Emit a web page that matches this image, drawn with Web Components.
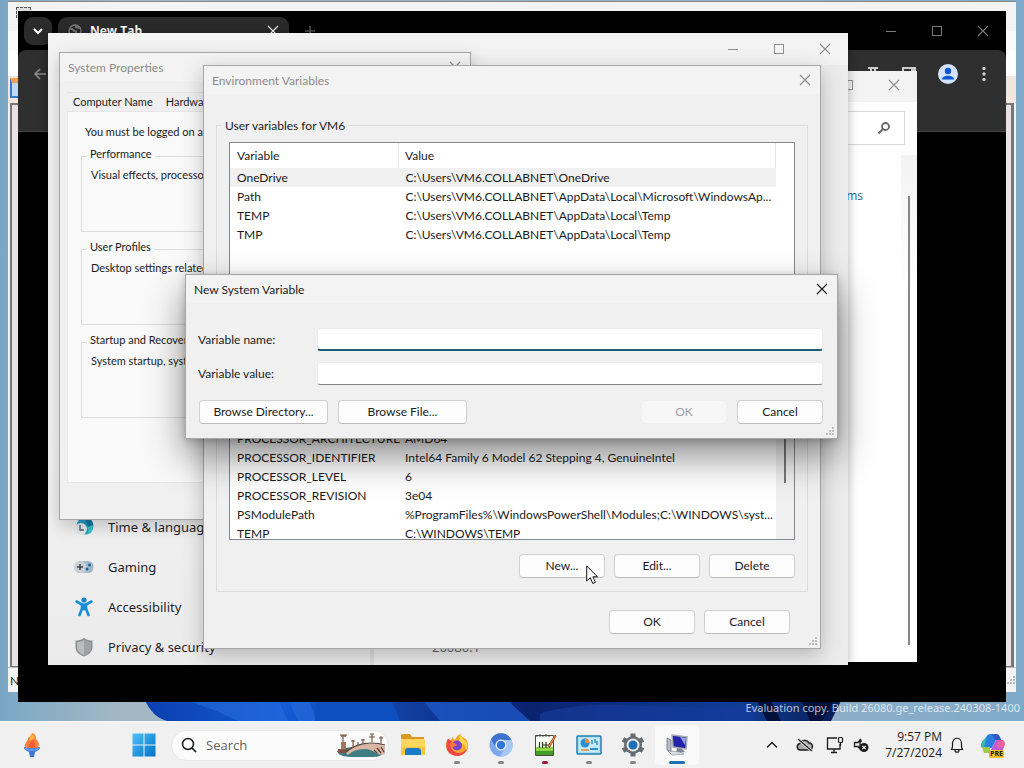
<!DOCTYPE html>
<html lang="en">
<head>
<meta charset="utf-8">
<title>Desktop</title>
<style>
  html, body { height: 100%; margin: 0; overflow: hidden; }
  body {
    font: 12px/19px Lato, "Open Sans", sans-serif;
    color: #1b1b1b;
  }
</style>
</head>
<body>
<desk-top>
  <editor-window></editor-window>
  <browser-window></browser-window>
  <panel-window></panel-window>
  <settings-window></settings-window>

  <dialog-window class="sysprops" heading="System Properties" inactive>
    <system-page></system-page>
  </dialog-window>

  <dialog-window class="env" heading="Environment Variables" inactive sizable>
    <env-page></env-page>
  </dialog-window>

  <dialog-window class="newvar" heading="New System Variable" sizable>
    <variable-form></variable-form>
  </dialog-window>

  <build-mark slot="overlay"></build-mark>
  <mouse-pointer slot="overlay"></mouse-pointer>
  <task-bar slot="bar"></task-bar>
</desk-top>

<script>
const ICONS = {
  close: ['0 0 12 12', '<path d="M1 1l10 10M11 1L1 11" fill="none" stroke="currentColor" stroke-width="1.1"/>'],
  max: ['0 0 12 12', '<rect x="1.5" y="1.5" width="9" height="9" fill="none" stroke="currentColor"/>'],
  min: ['0 0 12 12', '<path d="M1 6.500h10" stroke="currentColor"/>'],
  plus: ['0 0 12 12', '<path d="M6 1v10M1 6h10" stroke="#555" stroke-width="1.6"/>'],
  down: ['0 0 12 12', '<path d="M2 4l4 4 4-4" fill="none" stroke="currentColor" stroke-width="2"/>'],
  up: ['0 0 12 12', '<path d="M1 8.500l5-5 5 5" fill="none" stroke="currentColor" stroke-width="1.400"/>'],
  back: ['0 0 14 14', '<path d="M13 7H2M7 2L2 7l5 5" fill="none" stroke="currentColor" stroke-width="1.600"/>'],
  globe: ['0 0 14 14', '<circle cx="7" cy="7" r="6" fill="none" stroke="currentColor" stroke-width="1.5"/><path d="M2 5c3-1 3 2 5 2s1 3 0 5M8 1c-1 3 2 3 5 3" fill="none" stroke="currentColor" stroke-width="2"/>'],
  find: ['0 0 14 14', '<circle cx="8.500" cy="5.500" r="3.500" fill="none" stroke="currentColor" stroke-width="1.800"/><path d="M6 8l-4.500 4.500" stroke="currentColor" stroke-width="2"/>'],
  search: ['0 0 16 16', '<circle cx="7" cy="7" r="5.500" fill="none" stroke="currentColor" stroke-width="1.500"/><path d="M11 11l4 4" stroke="currentColor" stroke-width="1.700"/>'],
  user: ['0 0 20 20', '<circle cx="10" cy="10" r="10" fill="#d3e3fd"/><circle cx="10" cy="7" r="3.200" fill="#0b57d0"/><path d="M4 15.500c0-5 12-5 12 0z" fill="#0b57d0"/>'],
  dots: ['0 0 4 16', '<g fill="currentColor"><circle cx="2" cy="2.500" r="1.700"/><circle cx="2" cy="8" r="1.700"/><circle cx="2" cy="13.500" r="1.700"/></g>'],
  flask: ['0 0 14 14', '<path d="M2 1h10M5 1v6l-4 6h12L9 7V1" fill="none" stroke="currentColor" stroke-width="2"/>'],
  side: ['0 0 14 14', '<rect x="1" y="1" width="12" height="12" fill="none" stroke="currentColor" stroke-width="2"/><path d="M9 1h4v12H9z" fill="currentColor"/>'],
  grip: ['0 0 10 10', '<g fill="#bcbcbc"><path d="M7 1h2v2H7zM7 4h2v2H7zM7 7h2v2H7zM4 4h2v2H4zM4 7h2v2H4zM1 7h2v2H1z"/></g>'],
  clock: ['0 0 20 20', '<circle cx="11" cy="9" r="8.500" fill="#2197c9"/><path d="M7 1c5-1 12 2 12 8s-3 8-7 9c5-5 0-7 2-10S11 3 7 1z" fill="#35c6c9"/><path d="M11 1c5 0 8 3 8 7l-5 2-2-5z" fill="#11759e"/><circle cx="7" cy="12" r="6" fill="#e3e9ed"/><path d="M6 8v5h4" fill="none" stroke="#56636d" stroke-width="1.300"/>'],
  pad: ['0 0 20 14', '<rect x=".5" y="1" width="19" height="12" rx="5.500" fill="#a3b8c7"/><rect x=".5" y="1" width="12" height="12" rx="5.500" fill="#c9cfd4"/><path d="M6 4v6M3 7h6" stroke="#3f474d" stroke-width="1.500"/><circle cx="13" cy="9" r="1.500" fill="#1d64a5"/><circle cx="15.500" cy="5" r="1.500" fill="#1d64a5"/>'],
  person: ['0 0 18 20', '<circle cx="9" cy="3" r="2.600" fill="#1683c8"/><path d="M1.500 4.500L7 7.500v4L4.500 18M16.500 4.500L11 7.500v4l2.500 6.500" fill="none" stroke="#168ed6" stroke-width="2.600" stroke-linecap="round"/><path d="M6 6.500h6v6l-3 1-3-1z" fill="#168ed6"/>'],
  shield: ['0 0 20 20', '<path d="M10 1c3 2 5 2.500 8.500 2.500V10c0 5-4 8-8.500 9.500C5.500 18 1.500 15 1.500 10V3.500C5 3.500 7 3 10 1z" fill="#8b8e90"/><path d="M10 3c2.500 1.500 4 2 7 2v5c0 4-3 6.500-7 8-4-1.500-7-4-7-8V5c3 0 4.500-.5 7-2z" fill="#b9bcbd"/><path d="M10 3v15c4-1.500 7-4 7-8V5c-3 0-4.500-.5-7-2z" fill="#a0a3a5"/>'],
  torch: ['0 0 20 26', '<path d="M2 15h16c0 3-3 4-5 5l-1 5H8l-1-5c-2-1-5-2-5-5z" fill="#3a78d1"/><path d="M4 16c-3-5 2-6 2-10 2-1 3-3 4-5 4 1 4 4 4 6 4 4 3 6 2 9z" fill="#f4803b"/><path d="M7 16c-1-4 2-6 4-9 1 4 3 5 2 9z" fill="#f25b34"/><path d="M9 2c3 0 4 3 3 5L7 9z" fill="#fbb33d"/><path d="M2 15c5 2 11 2 16 0-1 3-3 4-8 4s-7-1-8-4z" fill="#5a9ae8"/>'],
  start: ['0 0 24 24', '<defs><linearGradient id="s" x2="1" y2="1"><stop stop-color="#4cc3f5"/><stop offset="1" stop-color="#0070c9"/></linearGradient></defs><path d="M.5.5h11v11H.5zM12.500.5h11v11h-11zM.5 12.500h11v11H.5zM12.500 12.500h11v11h-11z" fill="url(#s)"/>'],
  bridge: ['0 0 50 26', '<path d="M1 19c12-5 28-6 36 0 4 3 8 3 12 1-4 6-12 5-25 5S3 25 1 19z" fill="#3f7d83"/><path d="M2 17h11v4H2z" fill="#7c5546"/><path d="M10 21C19 12 35 9 49 14v8c-4 2-6 0-8-1-9-6-21-5-29 2z" fill="#d9b6a4"/><path d="M10 20C20 11 35 9 49 13" fill="none" stroke="#54403d" stroke-width="1.200"/><path d="M38 18l3 3M41 16l4 5M45 15l3 5" stroke="#5a403b" stroke-width="1.300"/><path d="M7 3v15M17 8v8M22 10v4M27 7v5M36 2v8M45 4v9" stroke="#8b6658" stroke-width="1.300"/><path d="M5 3h5v2H5zM5 10h5v7H5z" fill="#a87763"/><path d="M4 3h7M33 5h6M34 2h4M43 6h4M15 9h4M25 8h4" stroke="#6d5148"/>'],
  folder: ['0 0 26 24', '<path d="M1 3c0-2 1-2 2-2h7l2 3h12v6H1z" fill="#d99a1f"/><path d="M1 6h22c1 0 2 1 2 2v14H1z" fill="#fbc53a"/><path d="M1 6h22c1 0 2 1 2 2v6H1z" fill="#ffd75c"/><path d="M5 22v-4c0-2 1-3 3-3h10c2 0 3 1 3 3v4z" fill="#1a7cc7"/>'],
  firefox: ['0 0 24 24', '<path d="M3 5l2 3 3-4 1 3c2-1 3-5 7-6l1 3c4 1 6 4 6 9 0 6-5 10-11 10S1 19 1 12c0-3 1-5 2-7z" fill="#f8a52d"/><path d="M3 6c-3 6-2 14 5 16 7 3 14-2 15-9-3 7-9 8-13 6-5-3-5-8-3-11z" fill="#f0454d"/><path d="M15 1l3 5c5 3 5 9 4 12-1-5-4-8-8-9z" fill="#ffdb4b"/><circle cx="12" cy="12.500" r="5" fill="#7b43d4"/><path d="M5 10c4-1 5 0 7 2-1 2-4 1-5 3-2-1-3-3-2-5z" fill="#ff7538"/>'],
  chromium: ['0 0 24 24', '<circle cx="12" cy="12" r="11.500" fill="#7aa9ee"/><path d="M2 6A11.500 11.500 0 0 1 22.500 7H12c-4 0-6 3-5.500 7z" fill="#3f72cf"/><path d="M22.500 7A11.500 11.500 0 0 1 11 23.500L16.500 15c1-3 0-6-2-8z" fill="#a9c8f7"/><circle cx="12" cy="12" r="5.500" fill="#f2f6fd"/><circle cx="12" cy="12" r="4.200" fill="#2f76d9"/>'],
  notepad: ['0 0 24 24', '<path d="M2.500 2.500h18v20h-18z" fill="#fbfff6" stroke="#4a4a40"/><path d="M3 14h17v8H3z" fill="#93d34a"/><path d="M3 18h17v4H3z" fill="#3f9c24"/><path d="M4 2v2M7 1v3M10 2v2M13 1v3M16 2v2" stroke="#444"/><path d="M6.500 9v6M9.500 9v6M9 12h3M13 9v6M12 12h4M16.500 10v5" stroke="#263c1a" stroke-width="1.200"/><path d="M15 13L22 2l1 1-6 11z" fill="#e8923d" stroke="#94391d" stroke-width=".7"/>'],
  cpanel: ['0 0 26 20', '<rect x="1" y="1" width="24" height="18" rx="1" fill="#a9ddf5" stroke="#247fae" stroke-width="1.500"/><rect x="3" y="3" width="20" height="14" fill="#c5eafa"/><circle cx="9" cy="8" r="4.500" fill="#2a8fd3"/><path d="M9 8V3.500A4.500 4.500 0 0 1 13.500 8z" fill="#f08d34"/><path d="M16 9V5M19 8V4M21 10V6" stroke="#1e83b9" stroke-width="1.300"/><path d="M5 15h8" stroke="#e5853a" stroke-width="1.500"/><path d="M14 14h8" stroke="#2a8fd3" stroke-width="2"/>'],
  gear: ['0 0 24 24', '<g stroke="#656b70" stroke-width="5"><path d="M12 .500v23M2 6.300l20 11.400M22 6.300L2 17.700"/></g><circle cx="12" cy="12" r="9" fill="#656b70"/><circle cx="12" cy="12" r="6.500" fill="#e7eaec"/><circle cx="12" cy="12" r="4.500" fill="#1c70b5"/>'],
  screen: ['0 0 24 22', '<path d="M7 1l15 2-1 12-13-2z" fill="#2323a8" stroke="#a5abb8" stroke-width="1.500"/><path d="M15 3l6 1-1 7z" fill="#97a2ee"/><path d="M12 14l5 1 3 3-9 1z" fill="#7c828e"/><path d="M2 4l4 2v12l-4-2z" fill="#b8bec9" stroke="#686e7c" stroke-width=".8"/><path d="M3 17l12 1 4 2-12 1z" fill="#dedfe4" stroke="#8b909b" stroke-width=".7"/>'],
  cloud: ['0 0 18 14', '<path d="M4 12a3.300 3.300 0 0 1 0-6.500A5 5 0 0 1 13 5a3.500 3.500 0 0 1 0 7z" fill="#aaa" stroke="currentColor" stroke-width="1.400"/><path d="M2 1l14 12" stroke="#f0f0f0" stroke-width="3"/><path d="M2 1l14 12" stroke="currentColor" stroke-width="1.400"/>'],
  network: ['0 0 18 18', '<path d="M11 2H1.500v11H14V8M5 16.500h6M8 13v3" fill="none" stroke="currentColor" stroke-width="1.300"/><rect x="12.500" y="1.500" width="4" height="5" rx="1" fill="none" stroke="currentColor" stroke-width="1.200"/><path d="M14.500 6.500V10" stroke="currentColor" stroke-width="1.200"/>'],
  sound: ['0 0 16 14', '<path d="M8 2v2M8 1L5 4.500H1.500v4H5l2 2.500V1" fill="none" stroke="currentColor" stroke-width="1.300"/><circle cx="11" cy="9.500" r="4.500" fill="currentColor"/><path d="M9.300 7.800l3.400 3.400m0-3.400l-3.400 3.400" stroke="#fff" stroke-width="1.200"/>'],
  bell: ['0 0 14 16', '<path d="M1.500 12.500C3 10 2.500 9 2.500 6.500c0-7 9-7 9 0 0 2.500-.5 3.500 1 6zM5 13c0 3 4 3 4 0" fill="none" stroke="currentColor" stroke-width="1.200"/>'],
  copilot: ['0 0 26 24', '<path d="M7 3c1-2 3-2 5-2h4c3 0 4 3 5 6h-5l-4 8H4c-4 0-3-3-2-6z" fill="#2b7de0"/><path d="M7 3L4 15c-4 0-3-3-2-6z" fill="#32b9b0"/><path d="M12 1h4c3 0 4 3 5 6h-6z" fill="#3457c8"/><path d="M12 15l4-8h5c4 0 4 3 3 7l-2 5H10z" fill="#c05bd6"/><path d="M18 7h4c3 1 3 4 2 7l-7 1z" fill="#ee5e98"/><path d="M2 14h8v6H4z" fill="#9ac94b"/>']
};

// Every element here is static markup in an open shadow root.
function define(name, html) {
  customElements.define(name, class extends HTMLElement {
    constructor() {
      super();
      this.attachShadow({ mode: 'open' }).innerHTML = html;
    }
  });
}

class UiIcon extends HTMLElement {
  connectedCallback() {
    const [box, body] = ICONS[this.getAttribute('name')];
    const [, , w, h] = box.split(' ');
    this.attachShadow({ mode: 'open' }).innerHTML = `
      <style>:host { display: inline-flex; flex: none; } svg { display: block; }</style>
      <svg viewBox="${box}" width="${w}" height="${h}" aria-hidden="true">${body}</svg>`;
  }
}
customElements.define('ui-icon', UiIcon);

class IconButton extends HTMLElement {
  connectedCallback() {
    this.attachShadow({ mode: 'open' }).innerHTML = `
      <style>
        :host { display: inline-flex; flex: none; width: var(--button-width, 46px); height: var(--button-height, 32px); }
        button { flex: 1; display: flex; align-items: center; justify-content: center; padding: 0; border: 0; background: none; color: inherit; }
      </style>
      <button type="button" aria-label="${this.getAttribute('label')}"><ui-icon name="${this.getAttribute('icon')}"></ui-icon></button>`;
  }
}
customElements.define('icon-button', IconButton);

class PushButton extends HTMLElement {
  connectedCallback() {
    this.attachShadow({ mode: 'open' }).innerHTML = `
      <style>
        :host { display: inline-flex; flex: none; width: 86px; height: 24px; }
        :host([wide]) { width: 129px; }
        button { flex: 1; padding: 0; border: 1px solid #d0d0d0; border-bottom-color: #bcbcbc; border-radius: 4px; background: #fdfdfd; color: #1b1b1b; font: inherit; line-height: 20px; }
        button:disabled { border-color: #f0f0f0; background: #f7f7f7; color: #a0a0a0; }
      </style>
      <button type="button" ${this.hasAttribute('disabled') ? 'disabled' : ''}><slot></slot></button>`;
  }
}
customElements.define('push-button', PushButton);

class DialogWindow extends HTMLElement {
  connectedCallback() {
    this.attachShadow({ mode: 'open' }).innerHTML = `
      <style>
        :host { display: flex; flex-direction: column; box-sizing: border-box; background: #f0f0f0; border: 1px solid #a6a6a6; }
        header { display: flex; flex: none; align-items: center; height: 28px; padding-left: 8px; background: #f3f3f3; --button-width: 30px; }
        h2 { flex: 1; margin: 0; font: inherit; }
        :host([inactive]) header { color: #8c8c8c; }
        main { flex: 1; min-height: 0; display: flex; flex-direction: column; }
        footer { display: flex; justify-content: flex-end; height: 10px; padding-right: 2px; margin-top: -12px; padding-bottom: 2px; }
        :host(:not([sizable])) footer { display: none; }
      </style>
      <header><h2>${this.getAttribute('heading')}</h2><icon-button icon="close" label="Close"></icon-button></header>
      <main><slot></slot></main>
      <footer><ui-icon name="grip"></ui-icon></footer>`;
  }
}

define('group-box', `
  <style>
    :host { display: block; }
    fieldset { box-sizing: border-box; height: 100%; margin: 0; padding: 0 12px; border: 1px solid #dcdcdc; min-width: 0; }
    legend { margin-left: -7px; padding: 0 3px; height: 19px; }
  </style>
  <fieldset><legend><slot name="legend"></slot></legend><slot></slot></fieldset>`);

class VarList extends HTMLElement {
  connectedCallback() {
    const rows = [...this.querySelectorAll('var-row')].map(r =>
      `<tr${r.hasAttribute('selected') ? ' class="selected"' : ''}><td>${r.getAttribute('name')}</td><td>${r.getAttribute('value')}</td></tr>`).join('');
    const head = this.hasAttribute('scrolled') ? '' :
      '<thead><tr><th>Variable</th><th>Value</th></tr></thead>';
    this.attachShadow({ mode: 'open' }).innerHTML = `
      <style>
        :host { display: flex; box-sizing: border-box; border: 1px solid #828790; background: #fff; overflow: hidden; }
        :host([scrolled]) table { margin-top: 87px; }
        .view { flex: 1; min-width: 0; }
        table { width: 100%; border-collapse: collapse; table-layout: fixed; }
        th { height: 25px; padding: 0 0 0 7px; font-weight: normal; text-align: left; }
        th:first-child { width: 161px; border-right: 1px solid #e3e3e3; }
        th:last-child { border-right: 1px solid #e3e3e3; padding-left: 6px; }
        td { height: 19px; line-height: 19px; padding: 0 0 0 7px; white-space: nowrap; }
        td:first-child { width: 161px; }
        .selected { background: #f0f0f0; }
        .bar { display: flex; justify-content: center; width: 18px; }
        :host([scrolled]) .bar { background: #f0f0f0; }
        :host([scrolled]) .bar::before { content: ""; width: 2px; height: 128px; margin-top: 13px; background: #777; }
      </style>
      <div class="view"><table>${head}<tbody>${rows}</tbody></table></div>
      <div class="bar"></div>`;
  }
}

define('system-page', `
  <style>
    :host { display: flex; flex-direction: column; flex: 1; padding: 11px 7px 36px; font-size: 11px; line-height: 14px; }
    nav { display: flex; gap: 13px; height: 18px; padding: 0 6px; align-items: center; border-top: 1px solid #e4e4e4; }
    nav a { color: inherit; text-decoration: none; }
    section { flex: 1; display: flex; flex-direction: column; gap: 8px; padding: 13px 13px 0; background: #f9f9f9; border: 1px solid #e6e6e6; }
    p { margin: 0; padding-left: 4px; white-space: nowrap; }
    p.detail { padding: 0; margin: 2px 0 0 -3px; }
    group-box { height: 85px; }
  </style>
  <nav><a href="#name">Computer Name</a><a href="#hardware">Hardware</a></nav>
  <section>
    <p>You must be logged on as</p>
    <group-box><span slot="legend">Performance</span><p class="detail">Visual effects, processor</p></group-box>
    <group-box><span slot="legend">User Profiles</span><p class="detail">Desktop settings related</p></group-box>
    <group-box><span slot="legend">Startup and Recovery</span><p class="detail">System startup, system</p></group-box>
  </section>`);

define('env-page', `
  <style>
    :host { display: flex; flex-direction: column; padding: 22px 12px 14px; }
    .user { height: 201px; }
    .user var-list { height: 133px; margin-top: 7px; }
    .system { height: 275px; }
    .system var-list { height: 199px; margin-top: 5px; }
    .row { display: flex; justify-content: flex-end; gap: 9px; }
    .system .row { margin-top: 14px; }
    .end { padding: 18px 18px 0 0; }
  </style>
  <group-box class="user">
    <span slot="legend">User variables for VM6</span>
    <var-list>
      <var-row name="OneDrive" value="C:\\Users\\VM6.COLLABNET\\OneDrive" selected></var-row>
      <var-row name="Path" value="C:\\Users\\VM6.COLLABNET\\AppData\\Local\\Microsoft\\WindowsAp..."></var-row>
      <var-row name="TEMP" value="C:\\Users\\VM6.COLLABNET\\AppData\\Local\\Temp"></var-row>
      <var-row name="TMP" value="C:\\Users\\VM6.COLLABNET\\AppData\\Local\\Temp"></var-row>
    </var-list>
  </group-box>
  <group-box class="system">
    <var-list scrolled>
      <var-row name="PROCESSOR_ARCHITECTURE" value="AMD64"></var-row>
      <var-row name="PROCESSOR_IDENTIFIER" value="Intel64 Family 6 Model 62 Stepping 4, GenuineIntel"></var-row>
      <var-row name="PROCESSOR_LEVEL" value="6"></var-row>
      <var-row name="PROCESSOR_REVISION" value="3e04"></var-row>
      <var-row name="PSModulePath" value="%ProgramFiles%\\WindowsPowerShell\\Modules;C:\\WINDOWS\\syst..."></var-row>
      <var-row name="TEMP" value="C:\\WINDOWS\\TEMP"></var-row>
    </var-list>
    <div class="row"><push-button>New...</push-button><push-button>Edit...</push-button><push-button>Delete</push-button></div>
  </group-box>
  <div class="row end"><push-button>OK</push-button><push-button>Cancel</push-button></div>`);

define('variable-form', `
  <style>
    :host { display: flex; flex-direction: column; padding: 25px 14px 14px 12px; }
    form { display: grid; grid-template-columns: 119px 1fr; row-gap: 11px; align-items: center; }
    input { box-sizing: border-box; width: 100%; height: 23px; padding: 0 6px; border: 1px solid #ececec; border-bottom: 1px solid #868686; border-radius: 3px; background: #fff; font: inherit; outline: none; }
    #name { border-bottom: 2px solid #1f5a75; }
    .row { display: flex; gap: 10px; padding: 15px 0 0 1px; }
    .row span { flex: 1; }
  </style>
  <form>
    <label for="name">Variable name:</label><input id="name" type="text">
    <label for="value">Variable value:</label><input id="value" type="text">
  </form>
  <div class="row">
    <push-button wide>Browse Directory...</push-button><push-button wide>Browse File...</push-button>
    <span></span>
    <push-button disabled>OK</push-button><push-button>Cancel</push-button>
  </div>`);

define('settings-window', `
  <style>
    :host { display: flex; flex-direction: column; background: linear-gradient(#f3f3f3 60%, #ebebeb); color: #1f1f1f; font-family: "Noto Sans", "Open Sans", sans-serif; }
    header { display: flex; justify-content: flex-end; color: #8f8f8f; }
    .body { flex: 1; display: grid; grid-template-columns: 322px 1fr; }
    nav { display: flex; flex-direction: column; justify-content: flex-end; margin-bottom: -2px; }
    a { display: flex; align-items: center; gap: 14px; height: 40px; padding-left: 26px; color: inherit; text-decoration: none; font-size: 13px; }
    a ui-icon { width: 20px; justify-content: center; }
    .page { display: flex; align-items: flex-end; padding: 0 0 8px 58px; border-left: 4px solid #dedede; background: #ececec; color: #666; font-size: 13px; }
  </style>
  <header><icon-button icon="min" label="Minimize"></icon-button><icon-button icon="max" label="Maximize"></icon-button><icon-button icon="close" label="Close"></icon-button></header>
  <div class="body">
    <nav>
      <a href="#time"><ui-icon name="clock"></ui-icon>Time &amp; language</a>
      <a href="#gaming"><ui-icon name="pad"></ui-icon>Gaming</a>
      <a href="#access"><ui-icon name="person"></ui-icon>Accessibility</a>
      <a href="#privacy"><ui-icon name="shield"></ui-icon>Privacy &amp; security</a>
    </nav>
    <div class="page">26080.1</div>
  </div>`);

define('panel-window', `
  <style>
    :host { display: flex; flex-direction: column; background: #fff; font-family: "Open Sans", sans-serif; }
    header { display: flex; justify-content: flex-end; height: 31px; background: #f3f3f3; color: #8f8f8f; --button-width: 46px; --button-height: 28px; }
    .find { display: flex; align-items: center; justify-content: flex-end; margin: 9px 12px 0 0; height: 32px; padding-right: 13px; border: 1px solid #d9d9d9; color: #666; }
    .body { flex: 1; display: flex; justify-content: flex-end; padding-top: 10px; }
    a { padding: 32px 38px 0 0; color: #2f6699; text-decoration: none; font-size: 12px; line-height: 18px; }
    .bar { width: 16px; display: flex; justify-content: center; padding: 41px 0 17px; background: linear-gradient(#f3f3f3, #fff 140px); }
    .bar::before { content: ""; width: 2px; background: #868686; }
  </style>
  <header><icon-button icon="max" label="Maximize"></icon-button><icon-button icon="close" label="Close"></icon-button></header>
  <div class="find"><ui-icon name="find"></ui-icon></div>
  <div class="body"><a href="#item">ms</a><div class="bar"></div></div>`);

define('browser-window', `
  <style>
    :host { display: flex; flex-direction: column; background: #000; color: #7a7a7a; }
    .strip { display: flex; align-items: center; height: 39px; padding-left: 6px; }
    .find, .tab { background: #2b2b2b; color: #fff; }
    .find { --button-width: 28px; height: 28px; display: flex; align-items: center; border-radius: 9px; }
    .tab { display: flex; align-items: center; gap: 8px; box-sizing: border-box; width: 231px; height: 28px; margin: 0 15px 0 6px; padding: 0 10px; border-radius: 9px; font: bold 12px "Open Sans", sans-serif; }
    .tab span { flex: 1; }
    .tab ui-icon:first-child { color: #777; }
    .strip > .space { flex: 1; }
    .tools { display: flex; align-items: center; box-sizing: border-box; height: 82px; padding: 0 20px 34px 15px; border-bottom: 1px solid #454545; border-radius: 8px 8px 0 0; background: #2f2f2f; }
    .tools > .space { flex: 1; }
    .tools ui-icon { margin-left: 22px; color: #ccc; }
    .tools ui-icon:first-child { margin: 0; color: #8b8b8b; }
    .tools ui-icon:last-child { margin-left: 24px; }
  </style>
  <div class="strip">
    <div class="find"><icon-button icon="down" label="Search tabs"></icon-button></div>
    <div class="tab"><ui-icon name="globe"></ui-icon><span>New Tab</span><ui-icon name="close"></ui-icon></div>
    <ui-icon name="plus"></ui-icon>
    <div class="space"></div>
    <icon-button icon="min" label="Minimize"></icon-button><icon-button icon="max" label="Maximize"></icon-button><icon-button icon="close" label="Close"></icon-button>
  </div>
  <div class="tools">
    <ui-icon name="back"></ui-icon>
    <div class="space"></div>
    <ui-icon name="flask"></ui-icon><ui-icon name="side"></ui-icon><ui-icon name="user"></ui-icon><ui-icon name="dots"></ui-icon>
  </div>`);

define('editor-window', `
  <style>
    :host { display: flex; flex-direction: column; background: #f3f3f3; border-top: 1px solid #888; box-sizing: border-box; }
    .caption { height: 29px; padding: 5px 8px 0; box-sizing: border-box; }
    .caption i { display: block; width: 13px; height: 10px; border: 1px dashed #555; border-bottom: 0; background: #ddd; }
    .menu { height: 20px; background: #f9f9f9; }
    .tools { height: 25px; background: #fff; }
    .tabs { display: flex; align-items: flex-start; box-sizing: border-box; height: 27px; padding: 2px 2px 0; background: #f1e6de; }
    .tabs i { width: 12px; height: 20px; margin-bottom: 4px; border: 2px solid #3979c8; border-top: 5px solid #f0a451; background: #bcd9f6; box-sizing: border-box; }
    .edit { flex: 1; margin: 0 2px; border: solid #777; border-width: 2px 3px 1px 2px; background: #e9e1e6; }
    .status { display: flex; align-items: center; justify-content: space-between; height: 24px; padding: 0 0 0 2px; border-top: 1px solid #bbb; }
  </style>
  <div class="caption"><i></i></div><div class="menu"></div><div class="tools"></div>
  <div class="tabs"><i></i></div>
  <div class="edit"></div>
  <div class="status"><span>N</span><ui-icon name="grip"></ui-icon></div>`);

define('build-mark', `
  <style>:host { display: block; font-family: "Noto Sans", sans-serif; font-size: 11px; line-height: 15px; color: rgba(255, 255, 255, .72); }</style>
  Evaluation copy. Build 26080.ge_release.240308-1400`);

define('mouse-pointer', `
  <style>:host { display: block; }</style>
  <svg width="13" height="20" viewBox="0 0 13 20" style="display:block"><path d="M.7 1v15l3.600-3.200 2.500 5.700 2.600-1.100-2.500-5.600h4.700z" fill="#fff" stroke="#111"/></svg>`);

define('desk-top', `
  <style>
    :host { display: flex; flex-direction: column; position: relative; height: 100vh; overflow: hidden; }
    .space { flex: 1; position: relative; overflow: hidden; background: linear-gradient(90deg, #7aa7c6, #a4b8c4 12%, #8faec8 80%, #7eaac9); }
    .art { position: absolute; inset: auto 0 0; width: 100%; height: 24px; }
    /* free-floating windows, back to front */
    ::slotted(*) { position: absolute; }
    ::slotted(editor-window) { left: 8px; right: 8px; top: 1px; height: 691px; }
    ::slotted(browser-window) { left: 18px; right: 18px; top: 11px; height: 691px; }
    ::slotted(panel-window) { left: 700px; top: 71px; width: 217px; height: 591px; }
    ::slotted(settings-window) { left: 48px; top: 33px; width: 800px; height: 632px; box-shadow: 0 0 10px rgba(0, 0, 0, .3); }
    ::slotted(.sysprops) { left: 59px; top: 52px; width: 412px; height: 468px; box-shadow: 0 6px 16px rgba(0, 0, 0, .2); }
    ::slotted(.env) { left: 203px; top: 65px; width: 618px; box-shadow: 0 6px 20px rgba(0, 0, 0, .24); }
    ::slotted(.newvar) { left: 185px; top: 274px; width: 653px; box-shadow: 0 18px 36px rgba(0, 0, 0, .45), 0 2px 8px rgba(0, 0, 0, .2); }
    ::slotted(build-mark) { right: 4px; bottom: 6px; }
    ::slotted(mouse-pointer) { left: 586px; top: 565px; }
    ::slotted(task-bar) { position: static; flex: none; }
  </style>
  <div class="space">
    <svg class="art" viewBox="0 0 1024 24" preserveAspectRatio="none">
      <defs><linearGradient id="b"><stop stop-color="#0b3fae"/><stop offset=".2" stop-color="#155bd3"/><stop offset=".35" stop-color="#1243a8"/><stop offset=".55" stop-color="#0b2370"/><stop offset=".85" stop-color="#103d98"/><stop offset="1" stop-color="#071c50"/></linearGradient></defs>
      <path d="M143 0c8 16 14 21 24 24h664l12-24z" fill="url(#b)"/>
      <path d="M178 0c22 8 40 14 60 24h50L277 0zM308 0l8 24h-18l-11-24z" fill="#2468dc" opacity=".7"/>
      <path d="M315 0v24h85L390 0z" fill="#0d4fbf"/><path d="M420 0l20 24h90L504 0z" fill="#1d56c4" opacity=".8"/>
      <path d="M540 16c70-18 130 2 215-9v17H540z" fill="#153b9a" opacity=".7"/>
      <path d="M755 0l12 24h14L769 0zM800 0l10 24h12L836 0z" fill="#03103a"/>
    </svg>
    <slot></slot>
    <slot name="overlay"></slot>
  </div>
  <slot name="bar"></slot>`);

define('task-bar', `
  <style>
    :host { display: flex; align-items: center; box-sizing: border-box; height: 47px; padding: 0 18px 0 22px; background: #f0f0f0; border-top: 1px solid #fafafa; font-family: "Open Sans", "Noto Sans", sans-serif; }
    .start { margin: 0 15px 0 90px; }
    .search { display: flex; align-items: center; box-sizing: border-box; width: 218px; height: 31px; padding: 0 2px 0 9px; gap: 9px; border: 1px solid #e8e8e8; border-radius: 16px; background: #fbfbfb; }
    input { flex: 1; min-width: 0; padding: 0; border: 0; background: none; font: inherit; font-size: 13px; outline: none; }
    input::placeholder { color: #606060; opacity: 1; }
    .apps { display: flex; margin: 0 0 0 2px; }
    .app { position: relative; display: flex; align-items: center; justify-content: center; width: 44px; height: 40px; border-radius: 4px; }
    .app::after { content: ""; position: absolute; bottom: 1px; width: 6px; height: 3px; border-radius: 2px; background: #858585; }
    .app:first-child::after { content: none; }
    .alert::after { background: #a3193c; }
    .active { background: #f9f9f9; }
    .active::after { width: 16px; background: #2070b5; }
    .tray { display: flex; align-items: center; margin-left: auto; }
    .tray > * { margin-left: 12px; }
    .tray > .wide { margin-left: 18px; }
    .tray > .time { margin-left: 16px; text-align: right; font-size: 12px; line-height: 16px; }
    .tray > .bell { margin-left: 8px; }
    .tray > .tight { margin-left: 9px; }
    .pilot { position: relative; display: flex; margin-left: 16px; }
    .pilot b { position: absolute; right: 2px; bottom: -1px; padding: 0 1px; border-radius: 2px; background: #f4bd28; font-size: 7px; line-height: 8px; }
  </style>
  <ui-icon name="torch"></ui-icon>
  <ui-icon class="start" name="start"></ui-icon>
  <label class="search"><ui-icon name="search"></ui-icon><input type="search" placeholder="Search" aria-label="Search"><ui-icon name="bridge"></ui-icon></label>
  <div class="apps">
    <div class="app"><ui-icon name="folder"></ui-icon></div>
    <div class="app"><ui-icon name="firefox"></ui-icon></div>
    <div class="app"><ui-icon name="chromium"></ui-icon></div>
    <div class="app alert"><ui-icon name="notepad"></ui-icon></div>
    <div class="app"><ui-icon name="cpanel"></ui-icon></div>
    <div class="app"><ui-icon name="gear"></ui-icon></div>
    <div class="app active"><ui-icon name="screen"></ui-icon></div>
  </div>
  <div class="tray">
    <ui-icon name="up"></ui-icon><ui-icon class="wide" name="cloud"></ui-icon><ui-icon name="network"></ui-icon><ui-icon class="tight" name="sound"></ui-icon>
    <div class="time">9:57 PM<br>7/27/2024</div>
    <ui-icon class="bell" name="bell"></ui-icon>
    <div class="pilot"><ui-icon name="copilot"></ui-icon><b>PRE</b></div>
  </div>`);

customElements.define('var-list', VarList);
customElements.define('dialog-window', DialogWindow);
</script>
</body>
</html>
